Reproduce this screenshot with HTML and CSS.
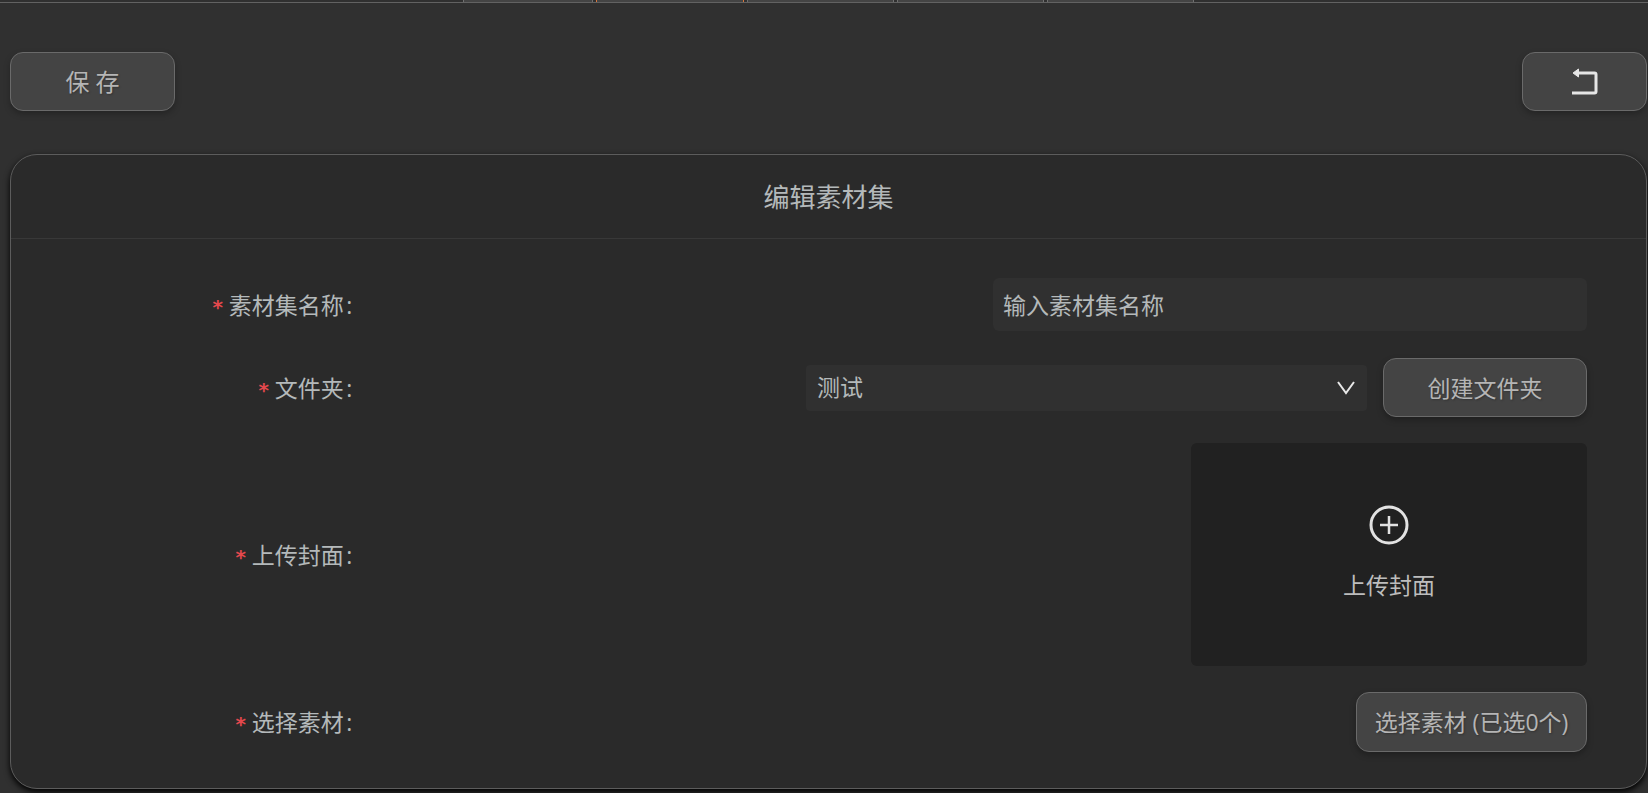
FILE: index.html
```html
<!DOCTYPE html>
<html lang="zh-CN">
<head>
<meta charset="utf-8">
<meta name="viewport" content="width=device-width, initial-scale=1">
<title>编辑素材集</title>
<link rel="stylesheet" href="styles.css">
</head>
<body>
<nav class="tabs" aria-hidden="true">
  <span class="tab tab-first"></span>
  <span class="tab tab-active"></span>
  <span class="tab"></span>
  <span class="tab"></span>
  <span class="tab"></span>
</nav>
<main class="page">
  <div class="toolbar">
    <button class="btn btn-save" type="submit" form="set-form">保 存</button>
    <button class="btn btn-back" type="button" aria-label="返回">
      <svg class="back-icon" viewBox="0 0 28 28" aria-hidden="true">
        <path d="M1 25H23.500Q25 25 25 23.500V6.500Q25 5 23.500 5H7" fill="none" stroke="#e6e6e6" stroke-width="3"/>
        <path d="M2 5L7.500 1V9Z" fill="#e6e6e6" stroke="#e6e6e6" stroke-width="1" stroke-linejoin="round"/>
      </svg>
    </button>
  </div>
  <section class="card">
    <h1 class="card-title">编辑素材集</h1>
    <form class="form" id="set-form">
      <div class="row">
        <label class="label" for="set-name"><span class="required">*</span>素材集名称<span class="colon">:</span></label>
        <div class="control"><input class="text-input" id="set-name" type="text" placeholder="输入素材集名称"></div>
      </div>
      <div class="row">
        <label class="label" for="folder"><span class="required">*</span>文件夹<span class="colon">:</span></label>
        <div class="control">
          <div class="select-box">
            <select class="select" id="folder"><option>测试</option></select>
            <svg class="chevron" viewBox="0 0 18 14" aria-hidden="true"><path d="M1 1L9 12L17 1" fill="none" stroke="#e8e8e8" stroke-width="2"/></svg>
          </div>
          <button class="btn btn-create" type="button">创建文件夹</button>
        </div>
      </div>
      <div class="row">
        <label class="label" for="cover"><span class="required">*</span>上传封面<span class="colon">:</span></label>
        <div class="control">
          <button class="upload" id="cover" type="button">
            <svg class="upload-icon" viewBox="0 0 40 40" aria-hidden="true"><circle cx="20" cy="20" r="18" fill="none" stroke="#e2e2e2" stroke-width="3"/><path d="M11 20H29M20 11V29" stroke="#e2e2e2" stroke-width="2.500"/></svg>
            <span>上传封面</span>
          </button>
        </div>
      </div>
      <div class="row">
        <label class="label" for="material"><span class="required">*</span>选择素材<span class="colon">:</span></label>
        <div class="control"><button class="btn btn-material" id="material" type="button">选择素材 (已选0个)</button></div>
      </div>
    </form>
  </section>
</main>
</body>
</html>
```
FILE: styles.css
```css
* {
  box-sizing: border-box;
}

body {
  margin: 0;
  background: #303030;
  color: #b4b9ba;
  font-family: "Open Sans", "Noto Sans CJK SC", sans-serif;
  font-size: 23px;
  line-height: 32px;
}

button,
input,
select {
  font: inherit;
  color: inherit;
}

.tabs {
  display: flex;
  justify-content: center;
  gap: 3px;
  height: 3px;
  border-bottom: 1px solid #626262;
}

.tab {
  width: 147px;
  background: #444;
  border: solid #707070;
  border-width: 0 1px;
}

.tab-first {
  width: 130px;
  margin-left: 9px;
}

.tab-active {
  width: 148px;
  border-color: #d9763a;
}

.page {
  padding: 49px 0 4px 10px;
  margin-right: 1px;
}

.toolbar {
  display: flex;
  justify-content: space-between;
  margin-bottom: 43px;
}

.btn {
  display: flex;
  align-items: center;
  justify-content: center;
  height: 59px;
  padding: 0;
  background: #444;
  border: 1px solid #6a6a6a;
  border-radius: 13px;
  box-shadow: 0 3px 6px rgba(0, 0, 0, 0.25);
  color: #b5b5b5;
  text-shadow: 1px 1px 2px rgba(0, 0, 0, 0.25);
  white-space: nowrap;
}

.btn-save {
  width: 165px;
  font-size: 24px;
}

.btn-back {
  width: 125px;
}

.back-icon {
  width: 28px;
  height: 28px;
}

.btn-create {
  width: 204px;
}

.btn-material {
  width: 231px;
  height: 60px;
}

.card {
  background: #2a2a2a;
  border: 1px solid #5c5c5c;
  border-radius: 27px;
  box-shadow: 0 3px 6px #000;
}

.card-title {
  margin: 0;
  padding: 26px 0 25px;
  border-bottom: 1px solid #383838;
  font-size: 26px;
  font-weight: 400;
  text-align: center;
}

.form {
  display: flex;
  flex-direction: column;
  gap: 26px;
  padding: 39px 59px 36px 0;
}

.row {
  display: flex;
  align-items: center;
}

.row:first-child {
  margin-bottom: 1px;
}

.label {
  display: flex;
  align-items: center;
  justify-content: flex-end;
  flex: 0 0 22%;
  padding-right: 3px;
}

.required {
  padding-top: 4px;
  margin-right: 5px;
  color: #e5484d;
  font-family: "DejaVu Sans Mono", monospace;
  font-size: 20px;
  font-weight: 700;
}

.colon {
  width: 11px;
  text-align: center;
}

.control {
  display: flex;
  flex: 1;
  align-items: center;
  justify-content: flex-end;
  gap: 16px;
  min-width: 0;
}

.text-input {
  width: 594px;
  max-width: 100%;
  height: 53px;
  padding: 0 10px;
  background: #303030;
  border: 0;
  border-radius: 6px;
}

.text-input::placeholder {
  color: #b4b9ba;
  opacity: 1;
}

.select-box {
  position: relative;
  width: 561px;
  min-width: 0;
}

.select {
  display: block;
  width: 100%;
  height: 46px;
  padding: 0 40px 2px 11px;
  appearance: none;
  background: #303030;
  border: 0;
  border-radius: 4px;
}

.chevron {
  position: absolute;
  top: 16px;
  right: 12px;
  width: 18px;
  height: 14px;
  pointer-events: none;
}

.upload {
  display: flex;
  flex-direction: column;
  align-items: center;
  justify-content: center;
  gap: 24px;
  width: 396px;
  height: 223px;
  padding: 0 0 4px;
  background: #212121;
  border: 0;
  border-radius: 6px;
  color: #bdbdbd;
}

.upload-icon {
  width: 40px;
  height: 40px;
}
```
